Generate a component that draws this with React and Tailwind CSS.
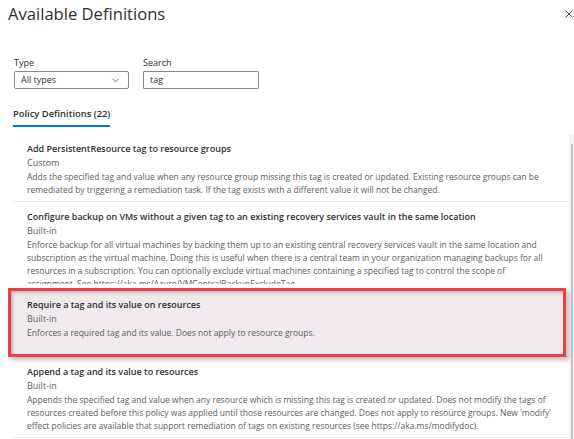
import React from 'react';
import { ChevronDown } from 'lucide-react';

const definitions = [
  {
    title: 'Add PersistentResource tag to resource groups',
    type: 'Custom',
    lines: [
      'Adds the specified tag and value when any resource group missing this tag is created or updated. Existing resource groups can be',
      'remediated by triggering a remediation task. If the tag exists with a different value it will not be changed.',
    ],
  },
  {
    title: 'Configure backup on VMs without a given tag to an existing recovery services vault in the same location',
    type: 'Built-in',
    clipped: true,
    lines: [
      'Enforce backup for all virtual machines by backing them up to an existing central recovery services vault in the same location and',
      'subscription as the virtual machine. Doing this is useful when there is a central team in your organization managing backups for all',
      'resources in a subscription. You can optionally exclude virtual machines containing a specified tag to control the scope of',
      'assignment. See https://aka.ms/Azure/VMCentralBackupExcludeTag',
    ],
  },
  {
    title: 'Require a tag and its value on resources',
    type: 'Built-in',
    selected: true,
    lines: ['Enforces a required tag and its value. Does not apply to resource groups.'],
  },
  {
    title: 'Append a tag and its value to resources',
    type: 'Built-in',
    lines: [
      'Appends the specified tag and value when any resource which is missing this tag is created or updated. Does not modify the tags of',
      "resources created before this policy was applied until those resources are changed. Does not apply to resource groups. New 'modify'",
      'effect policies are available that support remediation of tags on existing resources (see https://aka.ms/modifydoc).',
    ],
  },
];

function DefinitionRow({ item }) {
  return (
    <div className={`relative border-b border-[#edebe9] pl-[14px] pt-[8px] ${item.selected ? 'pb-[17px]' : 'pb-[5px]'}`}>
      {item.selected && (
        <div className="absolute left-[-5px] right-[3px] top-[-2px] bottom-[-1px] border-[3px] border-[#ef3e42] bg-[#eeeaee] shadow-[inset_2px_2px_3px_rgba(0,0,0,0.22),3px_3px_4px_rgba(0,0,0,0.25)]" />
      )}
      <div className="relative">
        <div className="text-[9px] leading-[14px] font-semibold text-[#323130] whitespace-nowrap">{item.title}</div>
        <div className="text-[9px] leading-[14px] text-[#605e5c]">{item.type}</div>
        <div className={`text-[8.5px] leading-[13px] text-[#605e5c] ${item.clipped ? 'max-h-[46px] overflow-hidden' : ''}`}>
          {item.lines.map((line, i) => (
            <div key={i} className="whitespace-nowrap">{line}</div>
          ))}
        </div>
      </div>
    </div>
  );
}

export default function App() {
  return (
    <div className="relative w-[574px] h-[439px] overflow-hidden bg-white font-['Open_Sans',sans-serif] text-[#323130]">
      {/* Header */}
      <div className="flex items-start justify-between pl-[8px]">
        <h1 className="text-[16.6px] leading-[28px] font-medium text-[#323130]">Available Definitions</h1>
        <svg width="8" height="8" viewBox="0 0 8 8" className="mt-[10px] mr-[1px] text-[#323130]">
          <path d="M0.5 0.5 L7.5 7.5 M7.5 0.5 L0.5 7.5" stroke="currentColor" strokeWidth="0.9" fill="none" />
        </svg>
      </div>

      {/* Filters */}
      <div className="flex gap-[14px] pl-[14px] mt-[29px]">
        <div className="w-[115px]">
          <div className="text-[9px] leading-[12px]">Type</div>
          <div className="mt-[2px] h-[18px] border border-[#8a8886] rounded-[2px] flex items-center justify-between pl-[6px] pr-[7px]">
            <span className="text-[9px] text-[#323130]">All types</span>
            <ChevronDown size={11} strokeWidth={1.5} className="text-[#323130]" />
          </div>
        </div>
        <div className="w-[116px]">
          <div className="text-[9px] leading-[12px]">Search</div>
          <div className="mt-[2px] h-[18px] border border-[#8a8886] rounded-[1px] flex items-center pl-[6px]">
            <span className="text-[9px] text-[#323130]">tag</span>
          </div>
        </div>
      </div>

      {/* Tab */}
      <div className="pl-[13px] mt-[19px] flex">
        <div className="text-[9.4px] leading-[12px] font-semibold pb-[5px] border-b-2 border-[#0078d4]">Policy Definitions (22)</div>
      </div>

      {/* List */}
      <div className="flex mt-[7px]">
        <div className="w-[569px] pl-[13px]">
          {definitions.map((item, i) => (
            <DefinitionRow key={i} item={item} />
          ))}
        </div>
        <div className="w-[5px] h-[310px] bg-[#f3f2f1] pt-[10px] flex justify-center">
          <div className="w-[2px] h-full bg-[#c8c6c4]" />
        </div>
      </div>
    </div>
  );
}
